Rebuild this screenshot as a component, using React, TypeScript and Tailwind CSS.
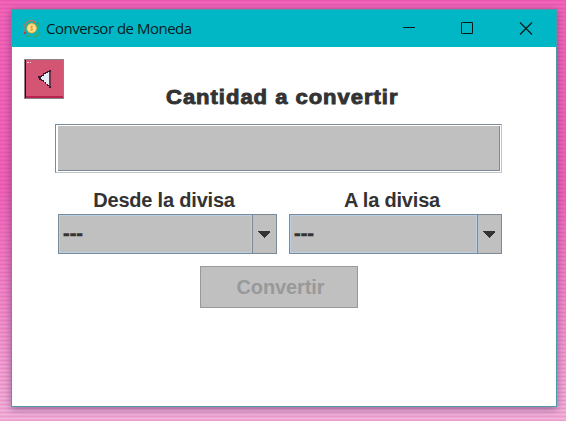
import React from "react";

function CoinIcon() {
  return (
    <svg width="17" height="17" viewBox="0 0 17 17" fill="none">
      <path d="M2 13A8 8 0 0 1 11 1" stroke="#b27a5c" strokeWidth="1.3" />
      <path d="M15 4A7.7 7.7 0 0 1 4 15" stroke="#3fa470" strokeWidth="1.8" />
      <circle cx="8.7" cy="8.3" r="5.7" fill="#58a05c" />
      <circle cx="8.7" cy="8.3" r="5" fill="#f5c65c" />
      <circle cx="8.7" cy="8.3" r="3.8" fill="#ffe39a" />
      <path d="M10.3 6.5H8.2Q7 7.4 8.6 8.2T9.3 10.1H7.1M8.7 5.5v5.6" stroke="#eda52c" strokeWidth="1.1" />
      <path d="M1 12h2v2H1z" fill="#cf3047" />
      <path d="M10 1h2v2h-2z" fill="#d1654b" />
      <path d="M14 2h2v2h-2z" fill="#2e9c79" />
    </svg>
  );
}

function TitleBar() {
  return (
    <header className="flex h-[37px] shrink-0 items-center bg-[#02b7c5] pl-[11px]">
      <CoinIcon />
      <h1 className="-mt-px ml-[6px] whitespace-nowrap font-['Open_Sans','Noto_Sans',sans-serif] text-[15px] leading-[20px] tracking-[-0.5px] text-[#021c1f]">
        Conversor de Moneda
      </h1>
      <div className="ml-auto flex h-full items-center">
        <svg width="162" height="37" viewBox="0 0 162 37" fill="none" stroke="#06181a">
          <path d="M9 17.5h12" />
          <path d="M67.5 12.5h11v11h-11z" />
          <path d="M126 12.5l12 12M138 12.5l-12 12" strokeWidth="1.2" />
        </svg>
      </div>
    </header>
  );
}

function BackButton() {
  return (
    <button className="block h-10 w-10 border border-[#8d8288] bg-[#d35473]" aria-label="Volver">
      <svg width="38" height="38" viewBox="0 0 38 38" shapeRendering="crispEdges">
        <path d="M0 0h1v38H0z" fill="#171217" />
        <path d="M1 36h37v2H1z" fill="#b92350" />
        <path d="M2 2h2v1H2zM5 2h1v1H5z" fill="#f7d9df" />
        <path d="M24 10h2v18h-2v-2h-2v-2h-2v-2h-2v-1h-2v-1h-2v-2h-1v-2h3v-1h2v-2h2v-1h2v-1h2z" fill="#351c2c" />
        <path d="M24 12v13h-1v-1h-2v-2h-2v-2h-2v-1h-1v-2h1v-1h2v-2h2v-1h2v-1z" fill="#e5ecf5" />
        <path d="M24 12h2v14h-2z" fill="#7b3147" />
      </svg>
    </button>
  );
}

function Select({ label, width, labelClass }: { label: string; width: string; labelClass: string }) {
  return (
    <div className={width}>
      <div className={"h-[26px] whitespace-nowrap text-center text-[20px] font-bold leading-[24px] tracking-[-0.2px] text-[#333] " + labelClass}>
        {label}
      </div>
      <div className="flex h-10 border border-[#7a8a99] bg-[#c0c0c0]">
        <div className="flex flex-1 items-center border border-[#b8cfe5] pb-[2px] pl-[3px] text-[20px] font-bold leading-[24px] text-[#333] [-webkit-text-stroke:0.5px_#333]">
          ---
        </div>
        <div className="flex w-[24px] items-center border-l border-[#7a8a99] pl-[5px]">
          <svg width="12" height="8" viewBox="0 0 12 8" shapeRendering="crispEdges">
            <path d="M0 1h12v1L6 8 0 2z" fill="#333" />
          </svg>
        </div>
      </div>
    </div>
  );
}

export default function App() {
  return (
    <div className="h-[421px] w-[566px] overflow-hidden bg-[repeating-linear-gradient(180deg,rgba(190,20,125,0.17)_0px,rgba(190,20,125,0.17)_1px,transparent_2px,transparent_3px,rgba(190,20,125,0.17)_4px),linear-gradient(180deg,#f468bb_0%,#f267bb_45%,#f4b8dd_100%)] pl-[11px] pt-[9px] font-['Liberation_Sans',Arial,sans-serif]">
      <div className="flex h-[398px] w-[546px] flex-col border border-[#4b9cab] bg-white shadow-[0_2px_8px_rgba(60,35,90,0.5)]">
        <TitleBar />
        <main className="flex flex-1 flex-col">
          <div className="flex h-[77px] pl-3 pt-3">
            <BackButton />
            <h2 className="ml-[102px] mt-[26px] origin-left scale-x-[1.1] whitespace-nowrap text-[20px] font-bold leading-[24px] tracking-[0.9px] text-[#333] [-webkit-text-stroke:0.9px_#333]">
              Cantidad a convertir
            </h2>
          </div>
          <div className="ml-[43px] h-[49px] w-[447px] border border-b-[#c0c4c9] border-l-[#7a8a99] border-r-[#c0c4c9] border-t-[#7a8a99]">
            <div className="h-full border border-l-2 border-white">
              <input className="block h-full w-full border-b border-r border-[#7a8a99] bg-[#c0c0c0] outline-none" />
            </div>
          </div>
          <div className="ml-[46px] mt-[15px] flex gap-3">
            <Select label="Desde la divisa" width="w-[219px]" labelClass="pr-[7px]" />
            <Select label="A la divisa" width="w-[213px]" labelClass="pr-[7px]" />
          </div>
          <button className="ml-[188px] mt-3 h-[42px] w-[158px] border border-[#999] bg-[#c0c0c0] pl-[3px] text-[20px] font-bold leading-[24px] tracking-[-0.1px] text-[#999]">
            Convertir
          </button>
        </main>
      </div>
    </div>
  );
}
